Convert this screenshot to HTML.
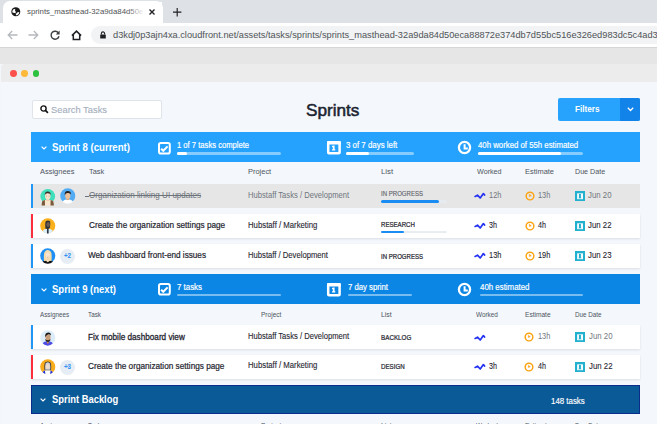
<!DOCTYPE html>
<html><head><meta charset="utf-8"><style>
html,body{margin:0;padding:0;width:657px;height:424px;overflow:hidden;background:#f3f6fa;}
body{position:relative;font-family:'Liberation Sans', sans-serif;}
</style></head><body>
<div style="position:absolute;left:0px;top:0px;width:657px;height:23px;background:#dee1e6"></div>
<div style="position:absolute;left:3px;top:1px;width:160px;height:23px;background:#fff;border-radius:7px 7px 0 0"></div>
<div style="position:absolute;left:-5px;top:14px;width:8px;height:9px;background:#dee1e6;border-bottom-right-radius:7px;"></div>
<div style="position:absolute;left:163px;top:14px;width:8px;height:9px;background:#dee1e6;border-bottom-left-radius:7px"></div>
<svg style="position:absolute;left:11.2px;top:6.6px;overflow:visible" width="9.6" height="9.6" viewBox="0 0 9.6 9.6"><circle cx="4.8" cy="4.8" r="4.5" fill="#1a1a1a"/><path d="M1.6 3.4 Q2.6 1.8 4.4 2.2 Q3.4 3 4.4 4.2 Q5.4 5 4.6 5.8 Q3.2 6.4 1.4 5.6 Q1.1 4.4 1.6 3.4Z" fill="#fff"/><path d="M4.6 6.8 Q6 6.2 6.6 5.2 Q7.4 4.8 8.4 5.6 Q8 7.6 5.6 8.4 Q4.8 7.6 4.6 6.8Z" fill="#fff"/></svg>
<span id="t0" style="position:absolute;left:26.9px;top:7.93px;font-size:8px;line-height:8px;font-weight:400;color:#505357;white-space:nowrap;transform-origin:0 0;transform:scaleX(0.976);">sprints_masthead-32a9da84d50e</span>
<div style="position:absolute;left:128px;top:2px;width:18px;height:20px;background:linear-gradient(90deg,rgba(255,255,255,0),#fff 90%)"></div>
<div style="position:absolute;left:145px;top:2px;width:17px;height:20px;background:#fff"></div>
<svg style="position:absolute;left:149.2px;top:8.6px;overflow:visible" width="6" height="6" viewBox="0 0 6 6"><path d="M0.5 0.5 L5.5 5.5 M5.5 0.5 L0.5 5.5" stroke="#202124" stroke-width="1.35"/></svg>
<svg style="position:absolute;left:172.8px;top:7.5px;overflow:visible" width="8.4" height="8.4" viewBox="0 0 8.4 8.4"><path d="M4.2 0 V8.4 M0 4.2 H8.4" stroke="#202124" stroke-width="1.15"/></svg>
<div style="position:absolute;left:0px;top:23px;width:657px;height:24px;background:#fff"></div>
<svg style="position:absolute;left:7px;top:30px;overflow:visible" width="11" height="10" viewBox="0 0 11 10"><path d="M10.5 5 H1.2 M5.2 1 L1.2 5 L5.2 9" stroke="#b5b8bc" stroke-width="1.3" fill="none"/></svg>
<svg style="position:absolute;left:28px;top:30px;overflow:visible" width="11" height="10" viewBox="0 0 11 10"><path d="M0.5 5 H9.8 M5.8 1 L9.8 5 L5.8 9" stroke="#b5b8bc" stroke-width="1.3" fill="none"/></svg>
<svg style="position:absolute;left:49.5px;top:30px;overflow:visible" width="10" height="10" viewBox="0 0 10 10"><path d="M8.6 3.2 A4 4 0 1 0 9 6.2" stroke="#3c4043" stroke-width="1.4" fill="none"/><path d="M9.6 0.6 V4.4 H5.8 Z" fill="#3c4043"/></svg>
<svg style="position:absolute;left:70.5px;top:29.5px;overflow:visible" width="11" height="11" viewBox="0 0 11 11"><path d="M0.9 5.6 L5.5 1.1 L10.1 5.6" stroke="#202124" stroke-width="1.5" fill="none" stroke-linejoin="miter"/><path d="M2.3 4.4 V9.6 H8.7 V4.4" stroke="#202124" stroke-width="1.5" fill="none"/></svg>
<div style="position:absolute;left:91px;top:26.4px;width:589px;height:17.300000000000004px;background:#f1f3f4;border-radius:9px"></div>
<svg style="position:absolute;left:100px;top:30.5px;overflow:visible" width="6" height="8" viewBox="0 0 6 8"><path d="M1.4 3.6 V2.5 A1.6 1.6 0 0 1 4.6 2.5 V3.6" stroke="#202124" stroke-width="1.1" fill="none"/><rect x="0.2" y="3.6" width="5.6" height="4" rx="0.5" fill="#202124"/></svg>
<span id="t1" style="position:absolute;left:113.4px;top:30.78px;font-size:9px;line-height:9px;font-weight:400;color:#505458;white-space:nowrap;transform-origin:0 0;transform:scaleX(1.026);">d3kdj0p3ajn4xa.cloudfront.net/assets/tasks/sprints/sprints_masthead-32a9da84d50eca88872e374db7d55bc516e326ed983dc5c4ad3</span>
<div style="position:absolute;left:0px;top:47px;width:657px;height:1px;background:#d6d6d6"></div>
<div style="position:absolute;left:0px;top:48px;width:657px;height:16px;background:#e6e6e6"></div>
<div style="position:absolute;left:1px;top:63.5px;width:699px;height:18.5px;background:#ececec;border-top-left-radius:4px"></div>
<div style="position:absolute;left:10.0px;top:69.8px;width:6.800000000000001px;height:6.800000000000011px;background:#fc4f4c;border-radius:50%"></div>
<div style="position:absolute;left:21.35px;top:69.8px;width:6.799999999999997px;height:6.800000000000011px;background:#fdb93a;border-radius:50%"></div>
<div style="position:absolute;left:32.7px;top:69.8px;width:6.799999999999997px;height:6.800000000000011px;background:#2cc23f;border-radius:50%"></div>
<div style="position:absolute;left:1px;top:82px;width:699px;height:342px;background:#f4f7fb"></div>
<div style="position:absolute;left:32.3px;top:99.8px;width:129.89999999999998px;height:18.900000000000006px;background:#fff;border:1px solid #dfe4ea;border-radius:2px;box-sizing:border-box"></div>
<svg style="position:absolute;left:39.6px;top:105.4px;overflow:visible" width="9" height="9" viewBox="0 0 9 9"><circle cx="3.5" cy="3.5" r="2.6" stroke="#111" stroke-width="1.4" fill="none"/><path d="M5.4 5.4 L7.9 7.9" stroke="#111" stroke-width="1.7"/></svg>
<span id="t2" style="position:absolute;left:51.1px;top:105.16px;font-size:9.5px;line-height:9.5px;font-weight:400;color:#a2adbc;white-space:nowrap;transform-origin:0 0;transform:scaleX(0.9849);-webkit-text-stroke:0.1px #a2adbc;">Search Tasks</span>
<span id="t3" style="position:absolute;left:305.8px;top:101.83px;font-size:16.5px;line-height:16.5px;font-weight:400;color:#1b2430;white-space:nowrap;transform-origin:0 0;transform:scaleX(1.0397);-webkit-text-stroke:0.5px #1b2430;">Sprints</span>
<div style="position:absolute;left:558.2px;top:97.7px;width:81.79999999999995px;height:23.299999999999997px;background:#27a3fd;border-radius:2px"></div>
<div style="position:absolute;left:620px;top:97.7px;width:20px;height:23.299999999999997px;background:#1283e8;border-radius:0 2px 2px 0"></div>
<span id="t4" style="position:absolute;left:575px;top:104.98px;font-size:9px;line-height:9px;font-weight:700;color:#fff;white-space:nowrap;transform-origin:0 0;transform:scaleX(0.9069);">Filters</span>
<svg style="position:absolute;left:626.5px;top:107px;overflow:visible" width="7" height="5" viewBox="0 0 7 5"><path d="M0.8 0.8 L3.5 3.5 L6.2 0.8" stroke="#fff" stroke-width="1.3" fill="none"/></svg>
<div style="position:absolute;left:31.3px;top:132.1px;width:608.9000000000001px;height:29.700000000000017px;background:#24a2fe;"></div>
<svg style="position:absolute;left:40.6px;top:145.75px;overflow:visible" width="6" height="4" viewBox="0 0 6 4"><path d="M0.6 0.6 L3 3 L5.4 0.6" stroke="#fff" stroke-width="1.2" fill="none"/></svg>
<span id="t5" style="position:absolute;left:51.9px;top:141.71px;font-size:10.8px;line-height:10.8px;font-weight:700;color:#fff;white-space:nowrap;transform-origin:0 0;transform:scaleX(0.8905);">Sprint 8 (current)</span>
<svg style="position:absolute;left:158.2px;top:142.3px;overflow:visible" width="13" height="13" viewBox="0 0 13 13"><rect x="1" y="1" width="10.8" height="10.6" rx="1.8" stroke="#fff" stroke-width="2" fill="none"/><path d="M3.1 6.7 L5.3 8.8 L9.6 4.4" stroke="#fff" stroke-width="2" fill="none"/></svg>
<span id="t6" style="position:absolute;left:177.4px;top:140.60px;font-size:8.5px;line-height:8.5px;font-weight:400;color:#fff;white-space:nowrap;transform-origin:0 0;transform:scaleX(0.8976);-webkit-text-stroke:0.18px #fff;">1 of 7 tasks complete</span>
<div style="position:absolute;left:177.4px;top:152.4px;width:104.1px;height:2.1999999999999886px;background:rgba(255,255,255,0.45);border-radius:2px"></div>
<div style="position:absolute;left:177.4px;top:152.4px;width:9.599999999999994px;height:2.1999999999999886px;background:#fff;border-radius:2px"></div>
<svg style="position:absolute;left:326.8px;top:141.4px;overflow:visible" width="14" height="14" viewBox="0 0 14 14"><rect x="1.2" y="1.2" width="11.4" height="11.1" rx="0.8" stroke="#fff" stroke-width="2.5" fill="none"/><rect x="0" y="0" width="13.8" height="3.6" rx="0.8" fill="#fff"/><path d="M5.9 4.4 H7.6 V8.3 H8.3 V9.4 H5 V8.3 H5.9 V6.3 H5 V5.3 Z" fill="#fff"/></svg>
<span id="t7" style="position:absolute;left:346px;top:140.60px;font-size:8.5px;line-height:8.5px;font-weight:400;color:#fff;white-space:nowrap;transform-origin:0 0;transform:scaleX(0.9277);-webkit-text-stroke:0.18px #fff;">3 of 7 days left</span>
<div style="position:absolute;left:346px;top:152.4px;width:67.69999999999999px;height:2.1999999999999886px;background:rgba(255,255,255,0.45);border-radius:2px"></div>
<div style="position:absolute;left:346px;top:152.4px;width:23.30000000000001px;height:2.1999999999999886px;background:#fff;border-radius:2px"></div>
<svg style="position:absolute;left:457.0px;top:140.3px;overflow:visible" width="15" height="15" viewBox="0 0 15 15"><circle cx="7.5" cy="7.5" r="5.6" stroke="#fff" stroke-width="2.3" fill="none"/><path d="M7.6 4.2 V8.4 H10.8" stroke="#fff" stroke-width="2" fill="none"/></svg>
<span id="t8" style="position:absolute;left:478.4px;top:140.60px;font-size:8.5px;line-height:8.5px;font-weight:400;color:#fff;white-space:nowrap;transform-origin:0 0;transform:scaleX(0.9170);-webkit-text-stroke:0.18px #fff;">40h worked of 55h estimated</span>
<div style="position:absolute;left:478.4px;top:152.4px;width:104.60000000000002px;height:2.1999999999999886px;background:rgba(255,255,255,0.45);border-radius:2px"></div>
<div style="position:absolute;left:478.4px;top:152.4px;width:82.5px;height:2.1999999999999886px;background:#fff;border-radius:2px"></div>
<span id="t9" style="position:absolute;left:39.5px;top:168.07px;font-size:7.6px;line-height:7.6px;font-weight:400;color:#4d5562;white-space:nowrap;transform-origin:0 0;transform:scaleX(0.9844);">Assignees</span>
<span id="t10" style="position:absolute;left:88.6px;top:168.07px;font-size:7.6px;line-height:7.6px;font-weight:400;color:#4d5562;white-space:nowrap;transform-origin:0 0;transform:scaleX(0.9728);">Task</span>
<span id="t11" style="position:absolute;left:248px;top:168.07px;font-size:7.6px;line-height:7.6px;font-weight:400;color:#4d5562;white-space:nowrap;transform-origin:0 0;transform:scaleX(0.9814);">Project</span>
<span id="t12" style="position:absolute;left:380.8px;top:168.07px;font-size:7.6px;line-height:7.6px;font-weight:400;color:#4d5562;white-space:nowrap;transform-origin:0 0;transform:scaleX(1.0314);">List</span>
<span id="t13" style="position:absolute;left:476.6px;top:168.07px;font-size:7.6px;line-height:7.6px;font-weight:400;color:#4d5562;white-space:nowrap;transform-origin:0 0;transform:scaleX(0.9450);">Worked</span>
<span id="t14" style="position:absolute;left:525px;top:168.07px;font-size:7.6px;line-height:7.6px;font-weight:400;color:#4d5562;white-space:nowrap;transform-origin:0 0;transform:scaleX(0.9815);">Estimate</span>
<span id="t15" style="position:absolute;left:575.3px;top:168.07px;font-size:7.6px;line-height:7.6px;font-weight:400;color:#4d5562;white-space:nowrap;transform-origin:0 0;transform:scaleX(0.9379);">Due Date</span>
<div style="position:absolute;left:31.3px;top:184px;width:608.7px;height:23.599999999999994px;background:#e6e6e6;"></div>
<div style="position:absolute;left:30.8px;top:184px;width:2.4999999999999964px;height:23.599999999999994px;background:#2196f3"></div>
<svg style="position:absolute;left:39.95px;top:188.65px;overflow:visible" width="15.5" height="15.5" viewBox="0 0 16 16"><circle cx="8" cy="7.6" r="7.6" fill="#3fdfbc"/><path d="M1.6 17 L2.2 12.8 Q3 11.6 5 11.4 L11 11.4 Q13 11.6 13.8 12.8 L14.4 17Z" fill="#fbe6d0"/><path d="M1.6 17 L2.2 12.8 Q3 11.6 5 11.4 L5.2 17Z M14.4 17 L13.8 12.8 Q13 11.6 11 11.4 L10.8 17Z" fill="#7a5a3c"/><rect x="6.4" y="9.6" width="3.2" height="2.8" fill="#f2cfae"/><ellipse cx="8" cy="7.2" rx="2.9" ry="3.6" fill="#f7e1cc"/><path d="M4.9 6.4 Q4.8 2.6 8 2.7 Q11.2 2.6 11.1 6.4 Q10.6 4.4 8 4.5 Q5.4 4.4 4.9 6.4Z" fill="#3b302c"/><rect x="6" y="6.8" width="1" height="1" fill="#c9a078"/><rect x="9" y="6.8" width="1" height="1" fill="#c9a078"/></svg>
<svg style="position:absolute;left:59.7px;top:187.85px;overflow:visible" width="15.5" height="15.5" viewBox="0 0 16 16"><circle cx="8" cy="8" r="7.8" fill="#52acf4"/><path d="M2.6 14.2 Q4 11.6 8 11.6 Q12 11.6 13.4 14.2 Q11 16.2 8 16.2 Q5 16.2 2.6 14.2Z" fill="#ffffff"/><rect x="6.6" y="10" width="2.8" height="2.4" fill="#e0a878"/><ellipse cx="8" cy="8" rx="2.7" ry="3.4" fill="#ecc09a"/><path d="M4.9 7.4 Q4.4 2.9 8.2 3 Q11.6 3 11.2 6.8 Q10.2 4.8 8 5.2 Q6 5 4.9 7.4Z" fill="#27221f"/></svg>
<span id="t16" style="position:absolute;left:88.5px;top:191.38px;font-size:9px;line-height:9px;font-weight:400;color:#6d737a;white-space:nowrap;transform-origin:0 0;transform:scaleX(0.8962);text-decoration:line-through;">Organization linking UI updates</span>
<div style="position:absolute;left:84.7px;top:195.60000000000002px;width:4.299999999999997px;height:0.8999999999999773px;background:#6d737a"></div>
<span id="t17" style="position:absolute;left:247.6px;top:191.76px;font-size:8.2px;line-height:8.2px;font-weight:400;color:#6f757d;white-space:nowrap;transform-origin:0 0;transform:scaleX(0.9321);">Hubstaff Tasks / Development</span>
<span id="t18" style="position:absolute;left:381px;top:190.47px;font-size:7px;line-height:7px;font-weight:400;color:#5b6068;white-space:nowrap;transform-origin:0 0;transform:scaleX(0.8638);-webkit-text-stroke:0.12px #5b6068;">IN PROGRESS</span>
<div style="position:absolute;left:381px;top:200.3px;width:65.89999999999998px;height:2.5px;background:#e6ebf0;border-radius:2px"></div>
<div style="position:absolute;left:381px;top:200.3px;width:58.30000000000001px;height:2.5px;background:#1b8df2;border-radius:2px"></div>
<svg style="position:absolute;left:474.1px;top:193.10000000000002px;overflow:visible" width="11" height="7" viewBox="0 0 11 7"><path d="M1.1 3.4 L3.5 2.2 L6.2 5 L9.4 0.6 L10.6 2" stroke="#2230f2" stroke-width="1.7" fill="none" stroke-linejoin="round" stroke-linecap="round"/></svg>
<span id="t19" style="position:absolute;left:489.4px;top:190.90px;font-size:8.5px;line-height:8.5px;font-weight:400;color:#72777e;white-space:nowrap;transform-origin:0 0;transform:scaleX(0.8740);">12h</span>
<svg style="position:absolute;left:524.5999999999999px;top:190.60000000000002px;overflow:visible" width="10" height="10" viewBox="0 0 10 10"><circle cx="5" cy="5" r="3.85" stroke="#fca311" stroke-width="1.45" fill="none"/><path d="M4.3 3.3 L4.3 5.5 L6.3 4.8 Z" fill="#fca311" stroke="#fca311" stroke-width="0.5" stroke-linejoin="round"/></svg>
<span id="t20" style="position:absolute;left:538.4px;top:190.90px;font-size:8.5px;line-height:8.5px;font-weight:400;color:#72777e;white-space:nowrap;transform-origin:0 0;transform:scaleX(0.8670);">13h</span>
<svg style="position:absolute;left:575.3px;top:190.8px;overflow:visible" width="10" height="10" viewBox="0 0 10 10"><rect x="0" y="0" width="10" height="10" fill="#22b0cf"/><rect x="2.1" y="2.3" width="5.9" height="5.9" fill="#f2fbfd"/><rect x="4" y="2.9" width="1.9" height="4.2" fill="#22b0cf"/><rect x="3.6" y="6.6" width="2.7" height="0.8" fill="#22b0cf" opacity="0.6"/></svg>
<span id="t21" style="position:absolute;left:588.3px;top:190.90px;font-size:8.5px;line-height:8.5px;font-weight:400;color:#72777e;white-space:nowrap;transform-origin:0 0;transform:scaleX(0.9204);">Jun 20</span>
<div style="position:absolute;left:31.3px;top:213.8px;width:608.7px;height:23.899999999999977px;background:#fff;box-shadow:0 1px 2px rgba(40,60,90,0.12);"></div>
<div style="position:absolute;left:30.8px;top:213.8px;width:2.4999999999999964px;height:23.899999999999977px;background:#fa2f3b"></div>
<svg style="position:absolute;left:39.7px;top:217.95px;overflow:visible" width="15.5" height="15.5" viewBox="0 0 16 16"><circle cx="8" cy="8" r="7.8" fill="#fbb01e"/><path d="M2.6 13.4 Q4 11 8 11 Q12 11 13.4 13.4 Q11 16 8 16 Q5 16 2.6 13.4Z" fill="#d9eefb"/><rect x="7.2" y="9" width="1.7" height="7" fill="#2e3440"/><path d="M5.6 11 Q5.2 4.8 5.8 3.6 Q8 1.8 10.4 3.4 Q11 6 10.2 10.2 L8 11.2Z" fill="#2b313b"/><ellipse cx="8.4" cy="6.6" rx="1.8" ry="2.6" fill="#6d5a52"/></svg>
<span id="t22" style="position:absolute;left:88.6px;top:220.98px;font-size:9px;line-height:9px;font-weight:400;color:#1f2630;white-space:nowrap;transform-origin:0 0;transform:scaleX(0.9097);-webkit-text-stroke:0.22px #1f2630;">Create the organization settings page</span>
<span id="t23" style="position:absolute;left:247.6px;top:221.76px;font-size:8.2px;line-height:8.2px;font-weight:400;color:#1f2630;white-space:nowrap;transform-origin:0 0;transform:scaleX(0.9491);-webkit-text-stroke:0.1px #1f2630;">Hubstaff / Marketing</span>
<span id="t24" style="position:absolute;left:381px;top:220.97px;font-size:7px;line-height:7px;font-weight:400;color:#1f2630;white-space:nowrap;transform-origin:0 0;transform:scaleX(0.8713);-webkit-text-stroke:0.22px #1f2630;">RESEARCH</span>
<div style="position:absolute;left:381px;top:230.7px;width:65.89999999999998px;height:2.3000000000000114px;background:#e8edf2;border-radius:2px"></div>
<div style="position:absolute;left:381px;top:230.7px;width:22.80000000000001px;height:2.3000000000000114px;background:#1b8df2;border-radius:2px"></div>
<svg style="position:absolute;left:474.1px;top:223.10000000000002px;overflow:visible" width="11" height="7" viewBox="0 0 11 7"><path d="M1.1 3.4 L3.5 2.2 L6.2 5 L9.4 0.6 L10.6 2" stroke="#2230f2" stroke-width="1.7" fill="none" stroke-linejoin="round" stroke-linecap="round"/></svg>
<span id="t25" style="position:absolute;left:489.4px;top:220.90px;font-size:8.5px;line-height:8.5px;font-weight:400;color:#1f2630;white-space:nowrap;transform-origin:0 0;transform:scaleX(0.8449);-webkit-text-stroke:0.1px #1f2630;">3h</span>
<svg style="position:absolute;left:524.5999999999999px;top:220.60000000000002px;overflow:visible" width="10" height="10" viewBox="0 0 10 10"><circle cx="5" cy="5" r="3.85" stroke="#fca311" stroke-width="1.45" fill="none"/><path d="M4.3 3.3 L4.3 5.5 L6.3 4.8 Z" fill="#fca311" stroke="#fca311" stroke-width="0.5" stroke-linejoin="round"/></svg>
<span id="t26" style="position:absolute;left:538.4px;top:220.90px;font-size:8.5px;line-height:8.5px;font-weight:400;color:#1f2630;white-space:nowrap;transform-origin:0 0;transform:scaleX(0.8449);-webkit-text-stroke:0.1px #1f2630;">4h</span>
<svg style="position:absolute;left:575.3px;top:220.8px;overflow:visible" width="10" height="10" viewBox="0 0 10 10"><rect x="0" y="0" width="10" height="10" fill="#22b0cf"/><rect x="2.1" y="2.3" width="5.9" height="5.9" fill="#f2fbfd"/><rect x="4" y="2.9" width="1.9" height="4.2" fill="#22b0cf"/><rect x="3.6" y="6.6" width="2.7" height="0.8" fill="#22b0cf" opacity="0.6"/></svg>
<span id="t27" style="position:absolute;left:588.3px;top:220.90px;font-size:8.5px;line-height:8.5px;font-weight:400;color:#1f2630;white-space:nowrap;transform-origin:0 0;transform:scaleX(0.9204);-webkit-text-stroke:0.1px #1f2630;">Jun 22</span>
<div style="position:absolute;left:31.3px;top:244px;width:608.7px;height:24px;background:#fff;box-shadow:0 1px 2px rgba(40,60,90,0.12);"></div>
<div style="position:absolute;left:30.8px;top:244px;width:2.4999999999999964px;height:24px;background:#2196f3"></div>
<svg style="position:absolute;left:39.85px;top:248.45px;overflow:visible" width="15.5" height="15.5" viewBox="0 0 16 16"><circle cx="8" cy="8" r="7.8" fill="#1e90f5"/><path d="M2.6 14.2 Q4.5 12 8 12 Q11.5 12 13.4 14.2 Q11 16.2 8 16.2 Q5 16.2 2.6 14.2Z" fill="#111"/><path d="M4.2 13.6 Q3.6 7 4.6 4.4 Q6 1.8 8.2 2 Q10.6 2 11.6 4.6 Q12.4 7.4 11.8 13.6 Q10 12.4 8 14.8 Q6 12.4 4.2 13.6Z" fill="#f2dcac"/><ellipse cx="8" cy="7.6" rx="2.1" ry="2.9" fill="#f7e4d2"/><path d="M6.9 11.6 Q8 12.6 9.1 11.6 L8.6 14.4 L7.4 14.4Z" fill="#f1d4bb"/><path d="M7.2 9.4 Q8 9.9 8.8 9.4" stroke="#b07a6a" stroke-width="0.5" fill="none"/></svg>
<div style="position:absolute;left:59.599999999999994px;top:248.7px;width:15.0px;height:15.0px;background:#e7edf4;border-radius:50%"></div>
<span id="t28" style="position:absolute;left:63.699999999999996px;top:251.87px;font-size:7px;line-height:7px;font-weight:700;color:#3593f2;white-space:nowrap;transform-origin:0 0;transform:scaleX(0.8767);-webkit-text-stroke:0.1px #3593f2;">+2</span>
<span id="t29" style="position:absolute;left:88.3px;top:251.38px;font-size:9px;line-height:9px;font-weight:400;color:#1f2630;white-space:nowrap;transform-origin:0 0;transform:scaleX(0.9082);-webkit-text-stroke:0.22px #1f2630;">Web dashboard front-end issues</span>
<span id="t30" style="position:absolute;left:247.6px;top:251.96px;font-size:8.2px;line-height:8.2px;font-weight:400;color:#1f2630;white-space:nowrap;transform-origin:0 0;transform:scaleX(0.9365);-webkit-text-stroke:0.1px #1f2630;">Hubstaff / Development</span>
<span id="t31" style="position:absolute;left:381px;top:252.67px;font-size:7px;line-height:7px;font-weight:400;color:#1f2630;white-space:nowrap;transform-origin:0 0;transform:scaleX(0.8638);-webkit-text-stroke:0.22px #1f2630;">IN PROGRESS</span>
<svg style="position:absolute;left:474.1px;top:253.3px;overflow:visible" width="11" height="7" viewBox="0 0 11 7"><path d="M1.1 3.4 L3.5 2.2 L6.2 5 L9.4 0.6 L10.6 2" stroke="#2230f2" stroke-width="1.7" fill="none" stroke-linejoin="round" stroke-linecap="round"/></svg>
<span id="t32" style="position:absolute;left:489.4px;top:251.10px;font-size:8.5px;line-height:8.5px;font-weight:400;color:#1f2630;white-space:nowrap;transform-origin:0 0;transform:scaleX(0.8740);-webkit-text-stroke:0.1px #1f2630;">13h</span>
<svg style="position:absolute;left:524.5999999999999px;top:250.8px;overflow:visible" width="10" height="10" viewBox="0 0 10 10"><circle cx="5" cy="5" r="3.85" stroke="#fca311" stroke-width="1.45" fill="none"/><path d="M4.3 3.3 L4.3 5.5 L6.3 4.8 Z" fill="#fca311" stroke="#fca311" stroke-width="0.5" stroke-linejoin="round"/></svg>
<span id="t33" style="position:absolute;left:538.4px;top:251.10px;font-size:8.5px;line-height:8.5px;font-weight:400;color:#1f2630;white-space:nowrap;transform-origin:0 0;transform:scaleX(0.8670);-webkit-text-stroke:0.1px #1f2630;">19h</span>
<svg style="position:absolute;left:575.3px;top:251px;overflow:visible" width="10" height="10" viewBox="0 0 10 10"><rect x="0" y="0" width="10" height="10" fill="#22b0cf"/><rect x="2.1" y="2.3" width="5.9" height="5.9" fill="#f2fbfd"/><rect x="4" y="2.9" width="1.9" height="4.2" fill="#22b0cf"/><rect x="3.6" y="6.6" width="2.7" height="0.8" fill="#22b0cf" opacity="0.6"/></svg>
<span id="t34" style="position:absolute;left:588.3px;top:251.10px;font-size:8.5px;line-height:8.5px;font-weight:400;color:#1f2630;white-space:nowrap;transform-origin:0 0;transform:scaleX(0.9204);-webkit-text-stroke:0.1px #1f2630;">Jun 23</span>
<div style="position:absolute;left:31.3px;top:273.9px;width:608.9000000000001px;height:29.80000000000001px;background:#0b86e4;"></div>
<svg style="position:absolute;left:40.6px;top:287.59999999999997px;overflow:visible" width="6" height="4" viewBox="0 0 6 4"><path d="M0.6 0.6 L3 3 L5.4 0.6" stroke="#fff" stroke-width="1.2" fill="none"/></svg>
<span id="t35" style="position:absolute;left:51.9px;top:283.56px;font-size:10.8px;line-height:10.8px;font-weight:700;color:#fff;white-space:nowrap;transform-origin:0 0;transform:scaleX(0.8816);">Sprint 9 (next)</span>
<svg style="position:absolute;left:158.2px;top:283px;overflow:visible" width="13" height="13" viewBox="0 0 13 13"><rect x="1" y="1" width="10.8" height="10.6" rx="1.8" stroke="#fff" stroke-width="2" fill="none"/><path d="M3.1 6.7 L5.3 8.8 L9.6 4.4" stroke="#fff" stroke-width="2" fill="none"/></svg>
<span id="t36" style="position:absolute;left:177.4px;top:282.50px;font-size:8.5px;line-height:8.5px;font-weight:400;color:#fff;white-space:nowrap;transform-origin:0 0;transform:scaleX(0.9281);-webkit-text-stroke:0.18px #fff;">7 tasks</span>
<div style="position:absolute;left:177.4px;top:294.3px;width:104.1px;height:2.1999999999999886px;background:rgba(255,255,255,0.45);border-radius:2px"></div>
<svg style="position:absolute;left:326.6px;top:282.7px;overflow:visible" width="14" height="14" viewBox="0 0 14 14"><rect x="1.2" y="1.2" width="11.4" height="11.1" rx="0.8" stroke="#fff" stroke-width="2.5" fill="none"/><rect x="0" y="0" width="13.8" height="3.6" rx="0.8" fill="#fff"/><path d="M5.9 4.4 H7.6 V8.3 H8.3 V9.4 H5 V8.3 H5.9 V6.3 H5 V5.3 Z" fill="#fff"/></svg>
<span id="t37" style="position:absolute;left:347.8px;top:282.50px;font-size:8.5px;line-height:8.5px;font-weight:400;color:#fff;white-space:nowrap;transform-origin:0 0;transform:scaleX(0.9101);-webkit-text-stroke:0.18px #fff;">7 day sprint</span>
<div style="position:absolute;left:347.8px;top:294.3px;width:64.59999999999997px;height:2.1999999999999886px;background:rgba(255,255,255,0.45);border-radius:2px"></div>
<svg style="position:absolute;left:457.3px;top:281.5px;overflow:visible" width="15" height="15" viewBox="0 0 15 15"><circle cx="7.5" cy="7.5" r="5.6" stroke="#fff" stroke-width="2.3" fill="none"/><path d="M7.6 4.2 V8.4 H10.8" stroke="#fff" stroke-width="2" fill="none"/></svg>
<span id="t38" style="position:absolute;left:480.2px;top:282.50px;font-size:8.5px;line-height:8.5px;font-weight:400;color:#fff;white-space:nowrap;transform-origin:0 0;transform:scaleX(0.9269);-webkit-text-stroke:0.18px #fff;">40h estimated</span>
<div style="position:absolute;left:480.2px;top:294.3px;width:103.09999999999997px;height:2.1999999999999886px;background:rgba(255,255,255,0.45);border-radius:2px"></div>
<span id="t39" style="position:absolute;left:39.6px;top:311.07px;font-size:7px;line-height:7px;font-weight:400;color:#4d5562;white-space:nowrap;transform-origin:0 0;transform:scaleX(0.9010);">Assignees</span>
<span id="t40" style="position:absolute;left:88.3px;top:311.07px;font-size:7px;line-height:7px;font-weight:400;color:#4d5562;white-space:nowrap;transform-origin:0 0;transform:scaleX(0.9024);">Task</span>
<span id="t41" style="position:absolute;left:261.3px;top:311.07px;font-size:7px;line-height:7px;font-weight:400;color:#4d5562;white-space:nowrap;transform-origin:0 0;transform:scaleX(0.9359);">Project</span>
<span id="t42" style="position:absolute;left:380.6px;top:311.07px;font-size:7px;line-height:7px;font-weight:400;color:#4d5562;white-space:nowrap;transform-origin:0 0;transform:scaleX(0.9811);">List</span>
<span id="t43" style="position:absolute;left:475.9px;top:311.07px;font-size:7px;line-height:7px;font-weight:400;color:#4d5562;white-space:nowrap;transform-origin:0 0;transform:scaleX(0.9125);">Worked</span>
<span id="t44" style="position:absolute;left:524.6px;top:311.07px;font-size:7px;line-height:7px;font-weight:400;color:#4d5562;white-space:nowrap;transform-origin:0 0;transform:scaleX(0.9400);">Estimate</span>
<span id="t45" style="position:absolute;left:574.9px;top:311.07px;font-size:7px;line-height:7px;font-weight:400;color:#4d5562;white-space:nowrap;transform-origin:0 0;transform:scaleX(0.8959);">Due Date</span>
<div style="position:absolute;left:31.3px;top:325.3px;width:608.7px;height:24.099999999999966px;background:#fff;box-shadow:0 1px 2px rgba(40,60,90,0.12);"></div>
<div style="position:absolute;left:30.8px;top:325.3px;width:2.4999999999999964px;height:24.099999999999966px;background:#2196f3"></div>
<svg style="position:absolute;left:39.7px;top:330.05px;overflow:visible" width="15.5" height="15.5" viewBox="0 0 16 16"><circle cx="8" cy="8" r="7.8" fill="#dcedf9"/><path d="M2.8 14 Q4 11.6 8 11.6 Q12 11.6 13.2 14 Q11 16.2 8 16.2 Q5 16.2 2.8 14Z" fill="#4d4de6"/><rect x="7.4" y="12.2" width="1.4" height="1.6" fill="#f39a1d"/><rect x="6.6" y="9.6" width="3" height="2.6" fill="#2a2422"/><ellipse cx="8.3" cy="7.6" rx="2.6" ry="3.3" fill="#c99e78"/><path d="M5.4 9.4 Q8 12.2 10.8 9.4 L10.6 10.8 Q8 13 5.6 10.8Z" fill="#2a2422"/><path d="M5.4 7.6 Q4.8 2.8 8.4 2.6 Q11.6 2.6 11.2 5.8 Q9.8 4 8 4.6 Q6.4 5 5.4 7.6Z" fill="#141414"/></svg>
<span id="t46" style="position:absolute;left:88.2px;top:332.68px;font-size:9px;line-height:9px;font-weight:400;color:#1f2630;white-space:nowrap;transform-origin:0 0;transform:scaleX(0.9084);-webkit-text-stroke:0.3px #1f2630;">Fix mobile dashboard view</span>
<span id="t47" style="position:absolute;left:247.6px;top:332.56px;font-size:8.2px;line-height:8.2px;font-weight:400;color:#1f2630;white-space:nowrap;transform-origin:0 0;transform:scaleX(0.9321);-webkit-text-stroke:0.1px #1f2630;">Hubstaff Tasks / Development</span>
<span id="t48" style="position:absolute;left:380.6px;top:333.97px;font-size:7px;line-height:7px;font-weight:400;color:#1f2630;white-space:nowrap;transform-origin:0 0;transform:scaleX(0.8978);-webkit-text-stroke:0.22px #1f2630;">BACKLOG</span>
<svg style="position:absolute;left:473.7px;top:334.6px;overflow:visible" width="11" height="7" viewBox="0 0 11 7"><path d="M1.1 3.4 L3.5 2.2 L6.2 5 L9.4 0.6 L10.6 2" stroke="#2230f2" stroke-width="1.7" fill="none" stroke-linejoin="round" stroke-linecap="round"/></svg>
<svg style="position:absolute;left:524.0999999999999px;top:332.1px;overflow:visible" width="10" height="10" viewBox="0 0 10 10"><circle cx="5" cy="5" r="3.85" stroke="#fca311" stroke-width="1.45" fill="none"/><path d="M4.3 3.3 L4.3 5.5 L6.3 4.8 Z" fill="#fca311" stroke="#fca311" stroke-width="0.5" stroke-linejoin="round"/></svg>
<span id="t49" style="position:absolute;left:538px;top:332.40px;font-size:8.5px;line-height:8.5px;font-weight:400;color:#72777e;white-space:nowrap;transform-origin:0 0;transform:scaleX(0.8670);">13h</span>
<svg style="position:absolute;left:575px;top:332.3px;overflow:visible" width="10" height="10" viewBox="0 0 10 10"><rect x="0" y="0" width="10" height="10" fill="#22b0cf"/><rect x="2.1" y="2.3" width="5.9" height="5.9" fill="#f2fbfd"/><rect x="4" y="2.9" width="1.9" height="4.2" fill="#22b0cf"/><rect x="3.6" y="6.6" width="2.7" height="0.8" fill="#22b0cf" opacity="0.6"/></svg>
<span id="t50" style="position:absolute;left:588.8px;top:332.40px;font-size:8.5px;line-height:8.5px;font-weight:400;color:#72777e;white-space:nowrap;transform-origin:0 0;transform:scaleX(0.9204);">Jun 20</span>
<div style="position:absolute;left:31.3px;top:354.7px;width:608.7px;height:23.900000000000034px;background:#fff;box-shadow:0 1px 2px rgba(40,60,90,0.12);"></div>
<div style="position:absolute;left:30.8px;top:354.7px;width:2.4999999999999964px;height:23.900000000000034px;background:#fa2f3b"></div>
<svg style="position:absolute;left:39.7px;top:359.45px;overflow:visible" width="15.5" height="15.5" viewBox="0 0 16 16"><circle cx="8" cy="8" r="7.8" fill="#f9ac1c"/><path d="M2.8 13.8 Q4 11.4 8 11.4 Q12 11.4 13.2 13.8 Q11 16.2 8 16.2 Q5 16.2 2.8 13.8Z" fill="#ffffff"/><path d="M2.8 13.8 Q3.4 12.2 5 11.8 L5.6 15.6 Q4 15 2.8 13.8Z M13.2 13.8 Q12.6 12.2 11 11.8 L10.4 15.6 Q12 15 13.2 13.8Z" fill="#1d2fd4"/><path d="M4.6 11.6 Q4 4.4 5.6 3.4 Q8 1.8 10.4 3.4 Q12 4.4 11.4 11.6Z" fill="#3d3a3a"/><path d="M5.4 11 Q5 5 6.2 4 Q8 2.8 9.8 4 Q11 5 10.6 11Z" fill="#cfd3d8"/><ellipse cx="8" cy="7.8" rx="2" ry="2.6" fill="#f0dcc8"/></svg>
<div style="position:absolute;left:59.599999999999994px;top:359.5px;width:15.0px;height:15.0px;background:#e7edf4;border-radius:50%"></div>
<span id="t51" style="position:absolute;left:63.699999999999996px;top:362.67px;font-size:7px;line-height:7px;font-weight:700;color:#3593f2;white-space:nowrap;transform-origin:0 0;transform:scaleX(0.8767);-webkit-text-stroke:0.1px #3593f2;">+3</span>
<span id="t52" style="position:absolute;left:88.2px;top:362.18px;font-size:9px;line-height:9px;font-weight:400;color:#1f2630;white-space:nowrap;transform-origin:0 0;transform:scaleX(0.9117);-webkit-text-stroke:0.22px #1f2630;">Create the organization settings page</span>
<span id="t53" style="position:absolute;left:247.6px;top:362.06px;font-size:8.2px;line-height:8.2px;font-weight:400;color:#1f2630;white-space:nowrap;transform-origin:0 0;transform:scaleX(0.9491);-webkit-text-stroke:0.1px #1f2630;">Hubstaff / Marketing</span>
<span id="t54" style="position:absolute;left:380.6px;top:363.47px;font-size:7px;line-height:7px;font-weight:400;color:#1f2630;white-space:nowrap;transform-origin:0 0;transform:scaleX(0.8866);-webkit-text-stroke:0.22px #1f2630;">DESIGN</span>
<svg style="position:absolute;left:473.7px;top:364.1px;overflow:visible" width="11" height="7" viewBox="0 0 11 7"><path d="M1.1 3.4 L3.5 2.2 L6.2 5 L9.4 0.6 L10.6 2" stroke="#2230f2" stroke-width="1.7" fill="none" stroke-linejoin="round" stroke-linecap="round"/></svg>
<span id="t55" style="position:absolute;left:488.8px;top:361.90px;font-size:8.5px;line-height:8.5px;font-weight:400;color:#1f2630;white-space:nowrap;transform-origin:0 0;transform:scaleX(0.8449);-webkit-text-stroke:0.1px #1f2630;">3h</span>
<svg style="position:absolute;left:524.0999999999999px;top:361.6px;overflow:visible" width="10" height="10" viewBox="0 0 10 10"><circle cx="5" cy="5" r="3.85" stroke="#fca311" stroke-width="1.45" fill="none"/><path d="M4.3 3.3 L4.3 5.5 L6.3 4.8 Z" fill="#fca311" stroke="#fca311" stroke-width="0.5" stroke-linejoin="round"/></svg>
<span id="t56" style="position:absolute;left:538px;top:361.90px;font-size:8.5px;line-height:8.5px;font-weight:400;color:#1f2630;white-space:nowrap;transform-origin:0 0;transform:scaleX(0.8449);-webkit-text-stroke:0.1px #1f2630;">4h</span>
<svg style="position:absolute;left:575px;top:361.8px;overflow:visible" width="10" height="10" viewBox="0 0 10 10"><rect x="0" y="0" width="10" height="10" fill="#22b0cf"/><rect x="2.1" y="2.3" width="5.9" height="5.9" fill="#f2fbfd"/><rect x="4" y="2.9" width="1.9" height="4.2" fill="#22b0cf"/><rect x="3.6" y="6.6" width="2.7" height="0.8" fill="#22b0cf" opacity="0.6"/></svg>
<span id="t57" style="position:absolute;left:588.8px;top:361.90px;font-size:8.5px;line-height:8.5px;font-weight:400;color:#1f2630;white-space:nowrap;transform-origin:0 0;transform:scaleX(0.9204);-webkit-text-stroke:0.1px #1f2630;">Jun 22</span>
<div style="position:absolute;left:31.1px;top:384.6px;width:609.1999999999999px;height:29.399999999999977px;background:#0b5a98;border:1.5px solid #0a2d8c;box-sizing:border-box"></div>
<svg style="position:absolute;left:40.1px;top:398.2px;overflow:visible" width="6" height="4" viewBox="0 0 6 4"><path d="M0.6 0.6 L3 3 L5.4 0.6" stroke="#fff" stroke-width="1.2" fill="none"/></svg>
<span id="t58" style="position:absolute;left:51.8px;top:394.58px;font-size:10.3px;line-height:10.3px;font-weight:700;color:#fff;white-space:nowrap;transform-origin:0 0;transform:scaleX(0.9109);">Sprint Backlog</span>
<span id="t59" style="position:absolute;left:550.6px;top:398.16px;font-size:8.2px;line-height:8.2px;font-weight:400;color:#fff;white-space:nowrap;transform-origin:0 0;transform:scaleX(0.9616);-webkit-text-stroke:0.15px #fff;">148 tasks</span>
<span id="t60" style="position:absolute;left:39.6px;top:422.37px;font-size:7px;line-height:7px;font-weight:400;color:#4d5562;white-space:nowrap;transform-origin:0 0;transform:scaleX(0.9010);">Assignees</span>
<span id="t61" style="position:absolute;left:88.3px;top:422.37px;font-size:7px;line-height:7px;font-weight:400;color:#4d5562;white-space:nowrap;transform-origin:0 0;transform:scaleX(0.9024);">Task</span>
<span id="t62" style="position:absolute;left:261.3px;top:422.37px;font-size:7px;line-height:7px;font-weight:400;color:#4d5562;white-space:nowrap;transform-origin:0 0;transform:scaleX(0.9359);">Project</span>
<span id="t63" style="position:absolute;left:380.6px;top:422.37px;font-size:7px;line-height:7px;font-weight:400;color:#4d5562;white-space:nowrap;transform-origin:0 0;transform:scaleX(0.9811);">List</span>
<span id="t64" style="position:absolute;left:475.9px;top:422.37px;font-size:7px;line-height:7px;font-weight:400;color:#4d5562;white-space:nowrap;transform-origin:0 0;transform:scaleX(0.9125);">Worked</span>
<span id="t65" style="position:absolute;left:524.6px;top:422.37px;font-size:7px;line-height:7px;font-weight:400;color:#4d5562;white-space:nowrap;transform-origin:0 0;transform:scaleX(0.9400);">Estimate</span>
<span id="t66" style="position:absolute;left:574.9px;top:422.37px;font-size:7px;line-height:7px;font-weight:400;color:#4d5562;white-space:nowrap;transform-origin:0 0;transform:scaleX(0.8959);">Due Date</span>
</body></html>
